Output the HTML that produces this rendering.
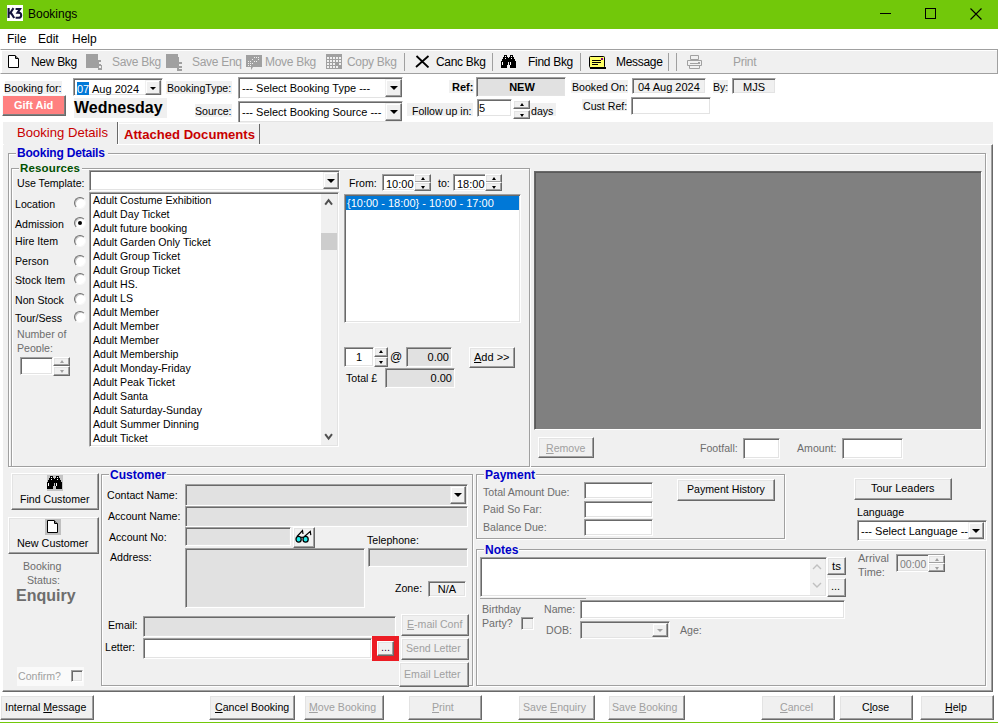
<!DOCTYPE html>
<html><head><meta charset="utf-8">
<style>
*{margin:0;padding:0;box-sizing:border-box}
html,body{width:998px;height:723px;overflow:hidden;background:#fff;position:relative;font-family:"Liberation Sans",sans-serif}
.a{position:absolute}
.t{position:absolute;font-size:10.6px;line-height:11px;white-space:nowrap;color:#000}
.g{color:#6d6d6d}
.dis{color:#a0a0a0}
.sk{position:absolute;border:1px solid;border-color:#a0a0a0 #fff #fff #a0a0a0;box-shadow:inset 1px 1px #696969,inset -1px -1px #e3e3e3;background:#fff}
.gr{background:#e1e1e1}
.rz{position:absolute;border:1px solid;border-color:#fff #696969 #696969 #fff;box-shadow:inset -1px -1px #a0a0a0,inset 1px 1px #e3e3e3;background:#f0f0f0}
.gb{position:absolute;border:1px solid #a0a0a0;box-shadow:inset 1px 1px #fff,1px 1px #fff}
.gt{position:absolute;background:#f0f0f0;font-weight:bold;font-size:12px;line-height:12px;white-space:nowrap;padding:0 1px}
.lb{position:absolute;background:#f0f0f0}
.dd{position:absolute;border:1px solid;border-color:#f0f0f0 #696969 #696969 #f0f0f0;box-shadow:inset -1px -1px #a0a0a0,inset 1px 1px #fff;background:#f0f0f0}
.dd.sm:after{margin:-1px 0 0 -3px;border-left-width:3px;border-right-width:3px;border-top-width:3px}
.dd.spg:after{border-top-color:#a0a0a0}
.dd:after{content:"";position:absolute;left:50%;top:50%;margin:-2px 0 0 -4px;border-left:4px solid transparent;border-right:4px solid transparent;border-top:4px solid #000}
.u{text-decoration:underline}
.spu:after,.spd:after{content:"";position:absolute;left:50%;top:50%;margin-left:-2px;border-left:2.5px solid transparent;border-right:2.5px solid transparent}
.spu:after{margin-top:-2px;border-bottom:3px solid #000}
.spd:after{margin-top:-1px;border-top:3px solid #000}
.spg:after{border-bottom-color:#a0a0a0!important;border-top-color:#a0a0a0!important}
.sep{position:absolute;top:53px;width:2px;height:18px;border-left:1px solid #a0a0a0;border-right:1px solid #fff}
.radio{position:absolute;width:12px;height:12px;border-radius:50%;background:#fff;border:1px solid;border-color:#707070 #f8f8f8 #f8f8f8 #707070;box-shadow:inset 1px 1px #c8c8c8}
.radio.on:after{content:"";position:absolute;left:3px;top:3px;width:4px;height:4px;border-radius:50%;background:#000}
</style></head><body>

<!-- title bar -->
<div class="a" style="left:0;top:0;width:998px;height:29px;background:#72c80a"></div>
<div class="a" style="left:7px;top:5px;width:16px;height:16px;background:#fff"></div>
<svg class="a" style="left:7px;top:5px" width="16" height="16"><g fill="none" stroke="#14143c" stroke-width="2.1"><path d="M1.6 3V13M2.6 9L6.5 3.2M3.8 7.6L7.2 13"/><path d="M8.6 4H13L10.6 7.6Q14.2 7.4 14.2 10.2Q14.2 12.8 11.2 12.8H8.6"/></g></svg>
<div class="t" style="left:28px;top:8px;font-size:12px;line-height:12px">Bookings</div>
<div class="a" style="left:880px;top:13px;width:11px;height:1px;background:#000"></div>
<div class="a" style="left:925px;top:8px;width:11px;height:11px;border:1px solid #000"></div>
<svg class="a" style="left:970px;top:8px" width="12" height="12"><path d="M0.5 0.5L11.5 11.5M11.5 0.5L0.5 11.5" stroke="#000" stroke-width="1.1"/></svg>

<!-- menu -->
<div class="t" style="left:7px;top:33px;font-size:12px;line-height:12px">File</div>
<div class="t" style="left:38px;top:33px;font-size:12px;line-height:12px">Edit</div>
<div class="t" style="left:72px;top:33px;font-size:12px;line-height:12px">Help</div>

<!-- toolbar -->
<div class="a" style="left:0;top:49px;width:998px;height:25px;background:#f0f0f0;border:1px solid #a0a0a0;border-left-color:#fff;box-shadow:inset 1px 1px #fff"></div>

<svg class="a" style="left:8px;top:55px" width="11" height="13"><path d="M0.5 0.5H7L10.5 4V12.5H0.5Z" fill="#fff" stroke="#000"/><path d="M7.5 0.5V3.5H10.5" fill="none" stroke="#000"/></svg>
<div class="t" style="left:31px;top:56px;font-size:12px;line-height:12px;letter-spacing:-0.3px">New Bkg</div>
<svg class="a" style="left:86px;top:54px" width="17" height="17"><rect x="0" y="0" width="12" height="14" fill="#a0a0a0"/><path d="M11 6h4v5h-4zM12 11h4v5h-4z" fill="#a0a0a0"/><rect x="13" y="8" width="2" height="2" fill="#f0f0f0"/><rect x="13" y="12" width="2" height="2" fill="#f0f0f0"/></svg>
<div class="t dis" style="left:112px;top:56px;font-size:12px;line-height:12px;letter-spacing:-0.3px;color:#a0a0a0">Save Bkg</div>
<svg class="a" style="left:166px;top:54px" width="17" height="17"><rect x="0" y="0" width="12" height="14" fill="#a0a0a0"/><path d="M11 3h2v14h-2zM11 8h5v2h-5zM11 12h5v2h-5zM11 15h5v2h-5z" fill="#a0a0a0"/></svg>
<div class="t" style="left:192px;top:56px;font-size:12px;line-height:12px;letter-spacing:-0.3px;color:#a0a0a0">Save Enq</div>
<svg class="a" style="left:246px;top:55px" width="16" height="16"><path d="M0 0h16v12h-9l-2 3v-3h-5z" fill="#a0a0a0"/><g fill="#f0f0f0"><rect x="2" y="6" width="1" height="1"/><rect x="4" y="6" width="1" height="1"/><rect x="6" y="4" width="1" height="1"/><rect x="8" y="2" width="1" height="1"/><rect x="10" y="2" width="1" height="1"/><rect x="12" y="2" width="1" height="1"/><rect x="2" y="8" width="1" height="1"/><rect x="4" y="8" width="1" height="1"/><rect x="6" y="8" width="1" height="1"/><rect x="8" y="6" width="1" height="1"/><rect x="10" y="6" width="1" height="1"/><rect x="12" y="4" width="1" height="1"/><rect x="2" y="10" width="1" height="1"/><rect x="4" y="10" width="1" height="1"/></g></svg>
<div class="t" style="left:265px;top:56px;font-size:12px;line-height:12px;letter-spacing:-0.3px;color:#a0a0a0">Move Bkg</div>
<svg class="a" style="left:326px;top:54px" width="16" height="15"><rect x="0" y="0" width="16" height="15" fill="#a0a0a0"/><g fill="#f0f0f0"><rect x="1" y="3" width="2" height="2"/><rect x="4" y="3" width="2" height="2"/><rect x="7" y="3" width="2" height="2"/><rect x="10" y="3" width="2" height="2"/><rect x="13" y="3" width="2" height="2"/><rect x="1" y="6" width="2" height="2"/><rect x="4" y="6" width="2" height="2"/><rect x="7" y="6" width="2" height="2"/><rect x="10" y="6" width="2" height="2"/><rect x="13" y="6" width="2" height="2"/><rect x="1" y="9" width="2" height="2"/><rect x="4" y="9" width="2" height="2"/><rect x="7" y="9" width="2" height="2"/><rect x="13" y="9" width="2" height="2"/><rect x="1" y="12" width="2" height="2"/><rect x="4" y="12" width="2" height="2"/><rect x="7" y="12" width="2" height="2"/><rect x="10" y="12" width="2" height="2"/></g></svg>
<div class="t" style="left:347px;top:56px;font-size:12px;line-height:12px;letter-spacing:-0.3px;color:#a0a0a0">Copy Bkg</div>
<div class="a" style="left:404px;top:53px;width:1px;height:18px;background:#a0a0a0"></div>
<svg class="a" style="left:415px;top:55px" width="15" height="13"><path d="M1.5 1L13.5 12.5M13.5 1L1 12" stroke="#000" stroke-width="1.8"/></svg>
<div class="t" style="left:436px;top:56px;font-size:12px;line-height:12px;letter-spacing:-0.3px">Canc Bkg</div>
<div class="a" style="left:492px;top:53px;width:1px;height:18px;background:#a0a0a0"></div>
<svg class="a" style="left:501px;top:55px" width="15" height="13"><path d="M3 0h3v1h-3zM9 0h3v1h-3zM3 1h1v1h-1zM5 1h1v1h-1zM9 1h1v1h-1zM11 1h1v1h-1zM2 2h5v1h-5zM8 2h5v1h-5zM2 3h2v1h-2zM5 3h5v1h-5zM11 3h2v1h-2zM1 4h13v1h-13zM1 5h13v1h-13zM0 6h15v1h-15zM0 7h1v1h-1zM2 7h5v1h-5zM8 7h1v1h-1zM10 7h5v1h-5zM0 8h1v1h-1zM2 8h5v1h-5zM8 8h1v1h-1zM10 8h5v1h-5zM0 9h1v1h-1zM2 9h5v1h-5zM8 9h1v1h-1zM10 9h5v1h-5zM0 10h6v1h-6zM9 10h6v1h-6zM0 11h6v1h-6zM9 11h6v1h-6zM0 12h6v1h-6zM9 12h6v1h-6z" fill="#000"/><path d="M4 1h1v1h-1zM10 1h1v1h-1zM4 3h1v1h-1zM10 3h1v1h-1zM1 7h1v1h-1zM9 7h1v1h-1zM1 8h1v1h-1zM9 8h1v1h-1zM1 9h1v1h-1zM9 9h1v1h-1z" fill="#fff"/></svg>
<div class="t" style="left:528px;top:56px;font-size:12px;line-height:12px;letter-spacing:-0.3px">Find Bkg</div>
<div class="a" style="left:580px;top:53px;width:1px;height:18px;background:#a0a0a0"></div>
<svg class="a" style="left:589px;top:56px" width="17" height="13"><rect x="0.5" y="0.5" width="15" height="11" rx="1" fill="#ffff66" stroke="#000"/><rect x="1" y="11" width="16" height="2" fill="#000"/><g fill="#000"><rect x="3" y="4" width="9" height="1"/><rect x="3" y="6" width="9" height="1"/><rect x="3" y="8" width="6" height="1"/></g><rect x="12" y="2" width="2" height="2" fill="#800080"/></svg>
<div class="t" style="left:616px;top:56px;font-size:12px;line-height:12px;letter-spacing:-0.3px">Message</div>
<div class="a" style="left:668px;top:53px;width:1px;height:18px;background:#a0a0a0"></div>
<div class="a" style="left:676px;top:53px;width:1px;height:18px;background:#a0a0a0"></div>
<svg class="a" style="left:686px;top:55px" width="17" height="14"><path d="M4.5 0.5h8v4h-8z M1.5 5.5h14v5h-14z M3.5 10.5h10v3h-10z" fill="#f0f0f0" stroke="#a0a0a0"/><rect x="4" y="8" width="8" height="1" fill="#a0a0a0"/><rect x="12" y="7" width="2" height="2" fill="#a0a0a0"/></svg>
<div class="t" style="left:733px;top:56px;font-size:12px;line-height:12px;letter-spacing:-0.3px;color:#a0a0a0">Print</div>


<!-- header -->

<div class="lb" style="left:5px;top:81px;width:57px;height:13px"></div>
<div class="t" style="left:4px;top:83px;font-size:10.8px">Booking for:</div>
<div class="a" style="left:2px;top:95px;width:64px;height:21px;background:#ff8080;border:1px solid;border-color:#f4fafa #696969 #696969 #f4fafa;box-shadow:inset -1px -1px #808080"></div>
<div class="t" style="left:14px;top:100px;color:#fff;font-weight:bold;font-size:11px">Gift Aid</div>
<div class="sk" style="left:73px;top:78px;width:90px;height:18px"></div>
<div class="a" style="left:77px;top:82px;width:12px;height:13px;background:#0078d7"></div>
<div class="t" style="left:77px;top:84px;font-size:11px;color:#fff">07</div>
<div class="t" style="left:92px;top:84px;font-size:11px">Aug 2024</div>
<div class="dd sm" style="left:145px;top:80px;width:16px;height:15px"></div>
<div class="lb" style="left:74px;top:98px;width:93px;height:20px"></div>
<div class="t" style="left:74px;top:100px;font-size:16px;line-height:16px;font-weight:bold">Wednesday</div>
<div class="lb" style="left:166px;top:81px;width:66px;height:13px"></div>
<div class="t" style="left:167px;top:83px">BookingType:</div>
<div class="lb" style="left:195px;top:104px;width:37px;height:13px"></div>
<div class="t" style="left:195px;top:106px">Source:</div>
<div class="sk" style="left:238px;top:77px;width:165px;height:22px"></div>
<div class="t" style="left:242px;top:83px;font-size:11px">--- Select Booking Type ---</div>
<div class="dd" style="left:385px;top:79px;width:17px;height:18px"></div>
<div class="sk" style="left:238px;top:101px;width:165px;height:22px"></div>
<div class="t" style="left:242px;top:107px;font-size:11px">--- Select Booking Source ---</div>
<div class="dd" style="left:385px;top:103px;width:17px;height:18px"></div>
<div class="lb" style="left:449px;top:80px;width:25px;height:13px"></div>
<div class="t" style="left:452px;top:82px;font-weight:bold;font-size:11px">Ref:</div>
<div class="sk gr" style="left:476px;top:77px;width:90px;height:20px"></div>
<div class="t" style="left:477px;top:82px;width:90px;text-align:center;font-weight:bold;font-size:11px">NEW</div>
<div class="lb" style="left:407px;top:103px;width:66px;height:13px"></div>
<div class="t" style="left:412px;top:106px">Follow up in:</div>
<div class="sk" style="left:477px;top:99px;width:35px;height:18px"></div>
<div class="t" style="left:479px;top:103px;font-size:11px">5</div>
<div class="rz spu" style="left:513px;top:100px;width:17px;height:9px"></div>
<div class="rz spd" style="left:513px;top:110px;width:17px;height:9px"></div>
<div class="lb" style="left:530px;top:103px;width:26px;height:13px"></div>
<div class="t" style="left:531px;top:106px">days</div>
<div class="lb" style="left:571px;top:80px;width:57px;height:13px"></div>
<div class="t" style="left:572px;top:82px">Booked On:</div>
<div class="sk" style="left:632px;top:78px;width:74px;height:16px;background:#f0f0f0"></div>
<div class="t" style="left:638px;top:82px;font-size:11px">04 Aug 2024</div>
<div class="lb" style="left:713px;top:80px;width:15px;height:13px"></div>
<div class="t" style="left:713px;top:82px">By:</div>
<div class="sk" style="left:732px;top:78px;width:44px;height:16px;background:#f0f0f0"></div>
<div class="t" style="left:732px;top:82px;width:44px;text-align:center;font-size:11px">MJS</div>
<div class="lb" style="left:582px;top:99px;width:45px;height:12px"></div>
<div class="t" style="left:583px;top:101px">Cust Ref:</div>
<div class="sk" style="left:631px;top:97px;width:80px;height:18px"></div>


<!-- tab control -->
<div class="a" style="left:2px;top:122px;width:991px;height:570px;background:#f0f0f0;border-left:1px solid #fff"></div>

<!-- tab headers -->
<div class="t" style="left:17px;top:126px;font-size:13.1px;line-height:13px;color:#c80000">Booking Details</div>
<div class="a" style="left:117px;top:122px;width:2px;height:23px;border-left:1px solid #696969;border-right:1px solid #fff"></div>
<div class="t" style="left:124px;top:128px;font-size:13.1px;line-height:13px;color:#c80000;font-weight:bold">Attached Documents</div>
<div class="a" style="left:119px;top:123px;width:140px;height:1px;background:#fff"></div>
<div class="a" style="left:259px;top:124px;width:1px;height:20px;background:#696969"></div>
<!-- tab page border -->
<div class="a" style="left:2px;top:144px;width:991px;height:548px;border:1px solid;border-color:#fff #696969 #696969 #fff;box-shadow:inset -1px -1px #a0a0a0"></div>

<div class="a" style="left:4px;top:144px;width:113px;height:1px;background:#f0f0f0"></div>
<!-- Booking details group -->
<div class="gb" style="left:8px;top:153px;width:978px;height:314px"></div>
<div class="gt" style="left:16px;top:147px;color:#0000c8;font-size:12px;letter-spacing:-0.2px;padding-right:3px">Booking Details</div>
<div class="gb" style="left:11px;top:168px;width:519px;height:299px"></div>
<div class="gt" style="left:19px;top:163px;color:#005000;font-size:11.5px;line-height:11px;letter-spacing:0.15px;padding-right:2px">Resources</div>
<div class="t" style="left:17px;top:178px">Use Template:</div>
<div class="sk" style="left:89px;top:170px;width:251px;height:21px"></div>
<div class="dd" style="left:323px;top:172px;width:16px;height:17px"></div>
<div class="sk" style="left:89px;top:192px;width:250px;height:255px"></div>
<div class="a" style="left:321px;top:194px;width:16px;height:251px;background:#f0f0f0"></div>
<svg class="a" style="left:324px;top:198px" width="10" height="8"><path d="M1.2 6.6L4.6 2.2L8 6.6" fill="none" stroke="#505050" stroke-width="2"/></svg>
<svg class="a" style="left:324px;top:433px" width="10" height="8"><path d="M1.2 1.2L4.6 5.6L8 1.2" fill="none" stroke="#505050" stroke-width="2"/></svg>
<div class="a" style="left:321px;top:233px;width:16px;height:17px;background:#cdcdcd"></div>
<div style="position:absolute;left:0;top:0">
<div class="t" style="left:93px;top:195px">Adult Costume Exhibition</div>
<div class="t" style="left:93px;top:209px">Adult Day Ticket</div>
<div class="t" style="left:93px;top:223px">Adult future booking</div>
<div class="t" style="left:93px;top:237px">Adult Garden Only Ticket</div>
<div class="t" style="left:93px;top:251px">Adult Group Ticket</div>
<div class="t" style="left:93px;top:265px">Adult Group Ticket</div>
<div class="t" style="left:93px;top:279px">Adult HS.</div>
<div class="t" style="left:93px;top:293px">Adult LS</div>
<div class="t" style="left:93px;top:307px">Adult Member</div>
<div class="t" style="left:93px;top:321px">Adult Member</div>
<div class="t" style="left:93px;top:335px">Adult Member</div>
<div class="t" style="left:93px;top:349px">Adult Membership</div>
<div class="t" style="left:93px;top:363px">Adult Monday-Friday</div>
<div class="t" style="left:93px;top:377px">Adult Peak Ticket</div>
<div class="t" style="left:93px;top:391px">Adult Santa</div>
<div class="t" style="left:93px;top:405px">Adult Saturday-Sunday</div>
<div class="t" style="left:93px;top:419px">Adult Summer Dinning</div>
<div class="t" style="left:93px;top:433px">Adult Ticket</div>
</div>
<div class="t" style="left:15px;top:199px">Location</div>
<div class="radio" style="left:74px;top:197px"></div>
<div class="t" style="left:15px;top:219px">Admission</div>
<div class="radio on" style="left:74px;top:217px"></div>
<div class="t" style="left:15px;top:236px">Hire Item</div>
<div class="radio" style="left:74px;top:235px"></div>
<div class="t" style="left:15px;top:256px">Person</div>
<div class="radio" style="left:74px;top:255px"></div>
<div class="t" style="left:15px;top:275px">Stock Item</div>
<div class="radio" style="left:74px;top:273px"></div>
<div class="t" style="left:15px;top:295px">Non Stock</div>
<div class="radio" style="left:74px;top:293px"></div>
<div class="t" style="left:15px;top:313px">Tour/Sess</div>
<div class="radio" style="left:74px;top:311px"></div>

<div class="a" style="left:14px;top:328px;width:70px;height:24px;overflow:hidden">
<div class="t g" style="left:3px;top:1px">Number of</div>
<div class="t g" style="left:3px;top:15px">People:</div>
</div>
<div class="sk" style="left:20px;top:357px;width:33px;height:18px"></div>
<div class="rz spu spg" style="left:53px;top:357px;width:17px;height:9px"></div>
<div class="rz spd spg" style="left:53px;top:366px;width:17px;height:10px"></div>

<!-- times -->
<div class="t" style="left:349px;top:178px">From:</div>
<div class="sk" style="left:382px;top:174px;width:49px;height:17px"></div>
<div class="t" style="left:386px;top:179px;font-size:11px">10:00</div>
<div class="rz spu" style="left:414px;top:174px;width:17px;height:9px"></div>
<div class="rz spd" style="left:414px;top:182px;width:17px;height:9px"></div>
<div class="t" style="left:438px;top:178px">to:</div>
<div class="sk" style="left:453px;top:174px;width:49px;height:17px"></div>
<div class="t" style="left:457px;top:179px;font-size:11px">18:00</div>
<div class="rz spu" style="left:485px;top:174px;width:17px;height:9px"></div>
<div class="rz spd" style="left:485px;top:182px;width:17px;height:9px"></div>
<div class="sk" style="left:344px;top:194px;width:177px;height:129px"></div>
<div class="a" style="left:346px;top:196px;width:173px;height:14px;background:#0078d7"></div>
<div class="t" style="left:347px;top:198px;color:#fff;font-size:11px">{10:00 - 18:00} - 10:00 - 17:00</div>

<div class="sk" style="left:344px;top:347px;width:30px;height:20px"></div>
<div class="t" style="left:356px;top:352px;font-size:11px">1</div>
<div class="rz spu" style="left:374px;top:347px;width:14px;height:10px"></div>
<div class="rz spd" style="left:374px;top:357px;width:14px;height:10px"></div>
<div class="t" style="left:390px;top:352px;font-size:12px">@</div>
<div class="sk gr" style="left:406px;top:347px;width:46px;height:20px"></div>
<div class="t" style="left:406px;top:352px;width:43px;text-align:right;font-size:11px">0.00</div>
<div class="rz" style="left:469px;top:347px;width:46px;height:21px"></div>
<div class="t" style="left:474px;top:352px;font-size:11px"><span class="u">A</span>dd &gt;&gt;</div>
<div class="t" style="left:346px;top:373px">Total &pound;</div>
<div class="sk gr" style="left:385px;top:368px;width:70px;height:20px"></div>
<div class="t" style="left:385px;top:373px;width:67px;text-align:right;font-size:11px">0.00</div>

<!-- gray panel -->
<div class="a" style="left:534px;top:171px;width:448px;height:259px;background:#808080;border:1px solid;border-color:#696969 #fff #fff #696969;box-shadow:inset 1px 1px #5a5a5a"></div>
<div class="rz" style="left:538px;top:437px;width:56px;height:21px"></div>
<div class="t dis" style="left:546px;top:443px"><span class="u">R</span>emove</div>
<div class="t g" style="left:700px;top:443px">Footfall:</div>
<div class="sk" style="left:743px;top:438px;width:37px;height:21px"></div>
<div class="t g" style="left:797px;top:443px">Amount:</div>
<div class="sk" style="left:842px;top:438px;width:61px;height:21px"></div>

<!-- left buttons -->
<div class="rz" style="left:11px;top:473px;width:88px;height:37px"></div>
<div class="a" style="left:47px;top:475px;width:16px;height:16px;background:#c4c4c4"></div>
<svg class="a" style="left:47px;top:476px" width="15" height="13"><path d="M3 0h3v1h-3zM9 0h3v1h-3zM3 1h1v1h-1zM5 1h1v1h-1zM9 1h1v1h-1zM11 1h1v1h-1zM2 2h5v1h-5zM8 2h5v1h-5zM2 3h2v1h-2zM5 3h5v1h-5zM11 3h2v1h-2zM1 4h13v1h-13zM1 5h13v1h-13zM0 6h15v1h-15zM0 7h1v1h-1zM2 7h5v1h-5zM8 7h1v1h-1zM10 7h5v1h-5zM0 8h1v1h-1zM2 8h5v1h-5zM8 8h1v1h-1zM10 8h5v1h-5zM0 9h1v1h-1zM2 9h5v1h-5zM8 9h1v1h-1zM10 9h5v1h-5zM0 10h6v1h-6zM9 10h6v1h-6zM0 11h6v1h-6zM9 11h6v1h-6zM0 12h6v1h-6zM9 12h6v1h-6z" fill="#000"/><path d="M4 1h1v1h-1zM10 1h1v1h-1zM4 3h1v1h-1zM10 3h1v1h-1zM1 7h1v1h-1zM9 7h1v1h-1zM1 8h1v1h-1zM9 8h1v1h-1zM1 9h1v1h-1zM9 9h1v1h-1z" fill="#fff"/></svg>
<div class="t" style="left:20px;top:494px">Find Customer</div>
<div class="rz" style="left:8px;top:517px;width:91px;height:37px"></div>
<div class="a" style="left:45px;top:519px;width:16px;height:16px;background:#c0c0c0"></div>
<svg class="a" style="left:47px;top:520px" width="11" height="13"><path d="M0.5 0.5H7L10.5 4V12.5H0.5Z" fill="#fff" stroke="#000"/><path d="M7.5 0.5V3.5H10.5" fill="none" stroke="#000"/></svg>
<div class="t" style="left:17px;top:538px;font-size:10.8px">New Customer</div>
<div class="t g" style="left:23px;top:561px">Booking</div>
<div class="t g" style="left:27px;top:575px">Status:</div>
<div class="t" style="left:16px;top:588px;font-size:16px;line-height:16px;font-weight:bold;color:#6d6d6d">Enquiry</div>
<div class="a" style="left:17px;top:667px;width:67px;height:19px;background:#fafafa"></div>
<div class="t" style="left:18px;top:671px;color:#a0a0a0">Confirm?</div>
<div class="sk" style="left:71px;top:670px;width:12px;height:12px;background:#f0f0f0"></div>

<!-- customer group -->
<div class="gb" style="left:101px;top:474px;width:372px;height:212px"></div>
<div class="gt" style="left:109px;top:469px;color:#0000c8">Customer</div>
<div class="t" style="left:107px;top:490px">Contact Name:</div>
<div class="sk gr" style="left:185px;top:484px;width:283px;height:22px"></div>
<div class="dd" style="left:450px;top:486px;width:16px;height:18px"></div>
<div class="t" style="left:108px;top:511px">Account Name:</div>
<div class="sk gr" style="left:185px;top:506px;width:283px;height:21px"></div>
<div class="t" style="left:109px;top:532px">Account No:</div>
<div class="sk gr" style="left:185px;top:527px;width:106px;height:19px"></div>
<div class="rz" style="left:293px;top:527px;width:22px;height:21px"></div>
<svg class="a" style="left:293px;top:527px" width="22" height="21"><path d="M4 9.5L9.5 3.6L10 7M11.5 9.5L17.3 4.4L17.8 8.2" fill="none" stroke="#000" stroke-width="1.2"/><path d="M7.5 10.3H10.5" stroke="#000" stroke-width="1.2"/><ellipse cx="5.6" cy="12.3" rx="2.6" ry="2.9" fill="#20e8e8" stroke="#000" stroke-width="1.3"/><ellipse cx="12.6" cy="12.3" rx="2.6" ry="2.9" fill="#20e8e8" stroke="#000" stroke-width="1.3"/></svg>
<div class="t" style="left:367px;top:535px">Telephone:</div>
<div class="t" style="left:110px;top:552px">Address:</div>
<div class="sk gr" style="left:185px;top:548px;width:180px;height:60px"></div>
<div class="sk gr" style="left:368px;top:548px;width:100px;height:19px"></div>
<div class="t" style="left:395px;top:583px">Zone:</div>
<div class="sk" style="left:428px;top:581px;width:38px;height:16px;background:#f0f0f0"></div>
<div class="t" style="left:428px;top:584px;width:38px;text-align:center;font-size:11px">N/A</div>
<div class="t" style="left:108px;top:620px">Email:</div>
<div class="sk gr" style="left:143px;top:616px;width:253px;height:21px"></div>
<div class="rz" style="left:401px;top:614px;width:68px;height:22px"></div>
<div class="t dis" style="left:407px;top:619px"><span class="u">E</span>-mail Conf</div>
<div class="t" style="left:105px;top:642px">Letter:</div>
<div class="sk" style="left:143px;top:638px;width:229px;height:21px"></div>
<div class="a" style="left:372px;top:636px;width:27px;height:25px;background:#ec1c24"></div>
<div class="rz" style="left:377px;top:641px;width:17px;height:15px"></div>
<div class="t" style="left:381px;top:642px;font-size:11px;color:#400040">...</div>
<div class="rz" style="left:401px;top:638px;width:68px;height:22px"></div>
<div class="t dis" style="left:406px;top:643px">Send Letter</div>
<div class="rz" style="left:399px;top:662px;width:70px;height:25px"></div>
<div class="t dis" style="left:404px;top:669px">Email Letter</div>

<!-- payment group -->
<div class="gb" style="left:476px;top:474px;width:309px;height:65px"></div>
<div class="gt" style="left:484px;top:469px;color:#0000c8">Payment</div>
<div class="t g" style="left:483px;top:487px">Total Amount Due:</div>
<div class="sk" style="left:584px;top:482px;width:69px;height:17px"></div>
<div class="t g" style="left:483px;top:504px">Paid So Far:</div>
<div class="sk" style="left:584px;top:501px;width:69px;height:17px"></div>
<div class="t g" style="left:483px;top:522px">Balance Due:</div>
<div class="sk" style="left:584px;top:519px;width:69px;height:17px"></div>
<div class="rz" style="left:677px;top:479px;width:98px;height:22px"></div>
<div class="t" style="left:687px;top:484px">Payment History</div>

<div class="rz" style="left:854px;top:478px;width:98px;height:22px"></div>
<div class="t" style="left:871px;top:483px;font-size:10.9px">Tour Leaders</div>
<div class="t" style="left:857px;top:507px">Language</div>
<div class="sk" style="left:857px;top:520px;width:130px;height:21px"></div>
<div class="t" style="left:861px;top:526px;font-size:11px">--- Select Language --</div>
<div class="dd" style="left:968px;top:522px;width:16px;height:17px"></div>

<!-- notes group -->
<div class="gb" style="left:476px;top:549px;width:510px;height:137px"></div>
<div class="gt" style="left:484px;top:544px;color:#0000c8">Notes</div>
<div class="sk" style="left:480px;top:557px;width:347px;height:40px"></div>
<div class="a" style="left:810px;top:559px;width:15px;height:36px;background:#f0f0f0"></div>
<svg class="a" style="left:812px;top:563px" width="10" height="7"><path d="M1 6L5 2L9 6" fill="none" stroke="#c0c0c0" stroke-width="1.4"/></svg>
<svg class="a" style="left:812px;top:582px" width="10" height="7"><path d="M1 1L5 5L9 1" fill="none" stroke="#c0c0c0" stroke-width="1.4"/></svg>
<div class="rz" style="left:827px;top:557px;width:19px;height:18px"></div>
<div class="t" style="left:832px;top:561px;font-size:11.5px">ts</div>
<div class="rz" style="left:827px;top:578px;width:19px;height:19px"></div>
<div class="t" style="left:831px;top:581px;font-size:11px">...</div>
<div class="a" style="left:480px;top:598px;width:106px;height:1px;background:#a0a0a0"></div>
<div class="t g" style="left:482px;top:604px">Birthday</div>
<div class="t g" style="left:482px;top:618px">Party?</div>
<div class="sk" style="left:521px;top:617px;width:13px;height:13px;background:#f0f0f0"></div>
<div class="t g" style="left:544px;top:604px">Name:</div>
<div class="sk" style="left:580px;top:600px;width:265px;height:19px"></div>
<div class="t g" style="left:546px;top:625px">DOB:</div>
<div class="sk" style="left:580px;top:621px;width:90px;height:18px;background:#f0f0f0"></div>
<div class="dd spg sm" style="left:652px;top:623px;width:16px;height:14px"></div>
<div class="t g" style="left:680px;top:625px">Age:</div>
<div class="t g" style="left:858px;top:553px;font-size:10.9px">Arrival</div>
<div class="t g" style="left:858px;top:567px;font-size:10.9px">Time:</div>
<div class="sk" style="left:896px;top:554px;width:49px;height:18px;background:#f0f0f0"></div>
<div class="t" style="left:900px;top:559px;font-size:10.5px;color:#808080">00:00</div>
<div class="rz spu spg" style="left:928px;top:555px;width:17px;height:9px"></div>
<div class="rz spd spg" style="left:928px;top:563px;width:17px;height:9px"></div>


<!-- bottom buttons -->

<div class="rz" style="left:0;top:695px;width:94px;height:25px"></div>
<div class="t" style="left:5px;top:702px">Internal <span class="u">M</span>essage</div>
<div class="rz" style="left:209px;top:695px;width:86px;height:25px"></div>
<div class="t" style="left:215px;top:702px"><span class="u">C</span>ancel Booking</div>
<div class="rz" style="left:304px;top:695px;width:80px;height:25px"></div>
<div class="t dis" style="left:309px;top:702px"><span class="u">M</span>ove Booking</div>
<div class="rz" style="left:408px;top:695px;width:74px;height:25px"></div>
<div class="t dis" style="left:432px;top:702px"><span class="u">P</span>rint</div>
<div class="rz" style="left:518px;top:695px;width:77px;height:25px"></div>
<div class="t dis" style="left:523px;top:702px">Save <span class="u">E</span>nquiry</div>
<div class="rz" style="left:608px;top:695px;width:77px;height:25px"></div>
<div class="t dis" style="left:612px;top:702px">Save <span class="u">B</span>ooking</div>
<div class="rz" style="left:761px;top:695px;width:74px;height:25px"></div>
<div class="t dis" style="left:780px;top:702px"><span class="u">C</span>ancel</div>
<div class="rz" style="left:839px;top:695px;width:74px;height:25px"></div>
<div class="t" style="left:862px;top:702px">C<span class="u">l</span>ose</div>
<div class="rz" style="left:920px;top:695px;width:74px;height:25px"></div>
<div class="t" style="left:945px;top:702px"><span class="u">H</span>elp</div>

<div class="a" style="left:0;top:722px;width:998px;height:1px;background:#72c80a"></div>
</body></html>
